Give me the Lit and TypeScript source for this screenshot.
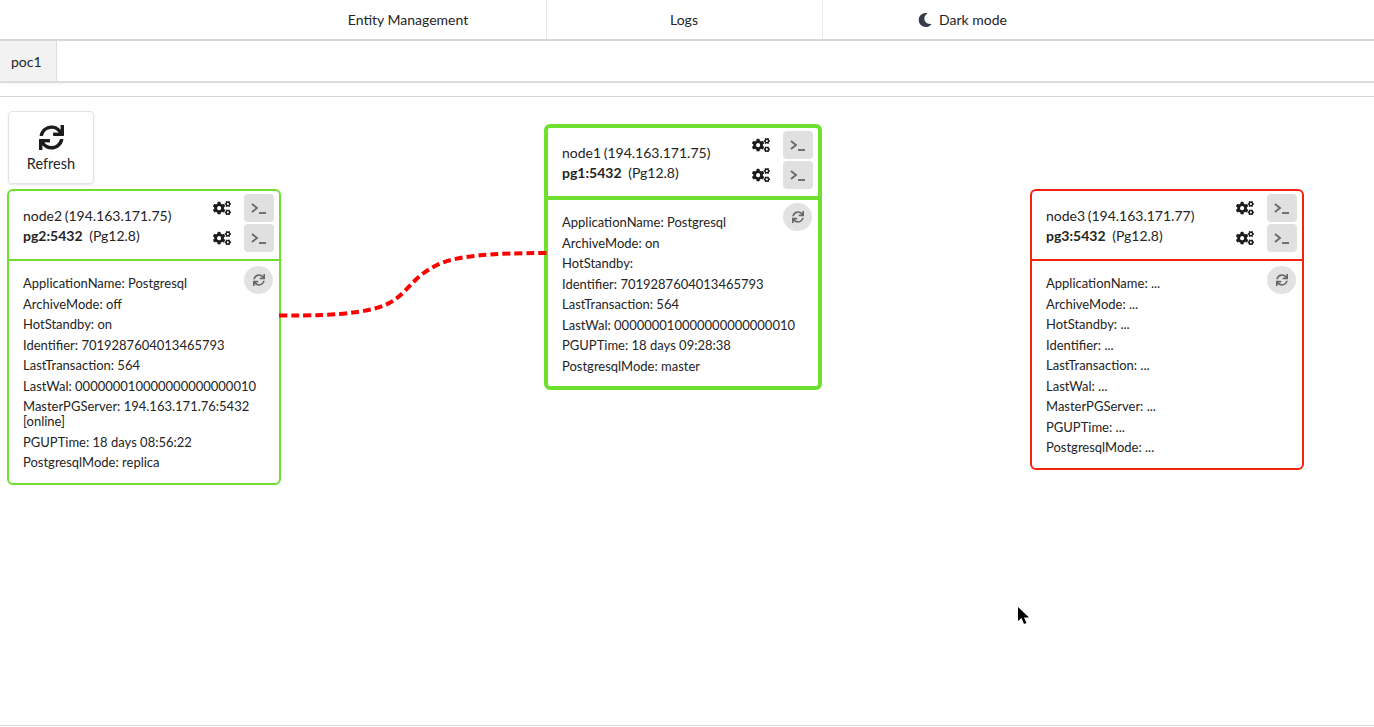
import { LitElement, html, css, svg } from 'lit';
import { customElement, property } from 'lit/decorators.js';

const SYNC = 'M440.65 12.57l4 82.77A247.16 247.16 0 0 0 255.83 8C134.73 8 33.91 94.92 12.29 209.82A12 12 0 0 0 24.09 224h49.05a12 12 0 0 0 11.67-9.26 175.91 175.91 0 0 1 317-56.94l-101.46-4.86a12 12 0 0 0-12.57 12v47.41a12 12 0 0 0 12 12H500a12 12 0 0 0 12-12V12a12 12 0 0 0-12-12h-47.37a12 12 0 0 0-11.98 12.57zM255.83 432a175.61 175.61 0 0 1-146-77.8l101.8 4.87a12 12 0 0 0 12.57-12v-47.4a12 12 0 0 0-12-12H12a12 12 0 0 0-12 12V500a12 12 0 0 0 12 12h47.35a12 12 0 0 0 12-12.6l-4.15-82.57A247.17 247.17 0 0 0 255.83 504c121.11 0 221.93-86.92 243.55-201.82a12 12 0 0 0-11.8-14.18h-49.05a12 12 0 0 0-11.67 9.26A175.86 175.86 0 0 1 255.83 432z';
const COGS = 'M512.1 191l-8.2 14.3c-3 5.3-9.4 7.5-15.1 5.4-11.8-4.4-22.6-10.7-32.1-18.6-4.6-3.8-5.8-10.5-2.8-15.7l8.2-14.3c-6.9-8-12.3-17.3-15.9-27.4h-16.5c-6 0-11.2-4.3-12.2-10.3-2-12-2.1-24.6 0-37.1 1-6 6.2-10.4 12.2-10.4h16.5c3.6-10.1 9-19.4 15.9-27.4l-8.2-14.3c-3-5.2-1.9-11.9 2.8-15.7 9.5-7.9 20.4-14.2 32.1-18.6 5.7-2.1 12.1.1 15.1 5.4l8.2 14.3c10.5-1.9 21.2-1.9 31.7 0L552 6.3c3-5.3 9.4-7.5 15.1-5.4 11.8 4.4 22.6 10.7 32.1 18.6 4.6 3.8 5.8 10.5 2.8 15.7l-8.2 14.3c6.9 8 12.3 17.3 15.9 27.4h16.5c6 0 11.2 4.3 12.2 10.3 2 12 2.1 24.6 0 37.1-1 6-6.2 10.4-12.2 10.4h-16.5c-3.6 10.1-9 19.4-15.9 27.4l8.2 14.3c3 5.2 1.9 11.9-2.8 15.7-9.5 7.9-20.4 14.2-32.1 18.6-5.7 2.1-12.1-.1-15.1-5.4l-8.2-14.3c-10.4 1.9-21.2 1.9-31.7 0zm-10.5-58.8c38.5 29.6 82.4-14.3 52.8-52.8-38.5-29.7-82.4 14.3-52.8 52.8zM386.3 286.1l33.7 16.8c10.1 5.8 14.5 18.1 10.5 29.1-8.9 24.2-26.4 46.4-42.6 65.8-7.4 8.9-20.2 11.1-30.3 5.3l-29.1-16.8c-16 13.7-34.6 24.6-54.9 31.7v33.6c0 11.6-8.3 21.6-19.7 23.6-24.6 4.2-50.4 4.4-75.9 0-11.5-2-20-11.9-20-23.6V418c-20.3-7.2-38.9-18-54.9-31.7L74 403c-10 5.8-22.9 3.6-30.3-5.3-16.2-19.4-33.3-41.6-42.2-65.7-4-10.9.4-23.2 10.5-29.1l33.3-16.8c-3.9-20.9-3.9-42.4 0-63.4L12 205.8c-10.1-5.8-14.6-18.1-10.5-29 8.9-24.2 26-46.4 42.2-65.8 7.4-8.9 20.2-11.1 30.3-5.3l29.1 16.8c16-13.7 34.6-24.6 54.9-31.7V57.1c0-11.5 8.2-21.5 19.6-23.5 24.6-4.2 50.5-4.4 76-.1 11.5 2 20 11.9 20 23.6v33.6c20.3 7.2 38.9 18 54.9 31.7l29.1-16.8c10-5.8 22.9-3.6 30.3 5.3 16.2 19.4 33.2 41.6 42.1 65.8 4 10.9.1 23.2-10 29.1l-33.7 16.8c3.9 21 3.9 42.5 0 63.5zm-117.6 21.1c59.2-77-28.7-164.9-105.7-105.7-59.2 77 28.7 164.9 105.7 105.7zm243.4 182.7l-8.2 14.3c-3 5.3-9.4 7.5-15.1 5.4-11.8-4.4-22.6-10.7-32.1-18.6-4.6-3.8-5.8-10.5-2.8-15.7l8.2-14.3c-6.9-8-12.3-17.3-15.9-27.4h-16.5c-6 0-11.2-4.3-12.2-10.3-2-12-2.1-24.6 0-37.1 1-6 6.2-10.4 12.2-10.4h16.5c3.6-10.1 9-19.4 15.9-27.4l-8.2-14.3c-3-5.2-1.9-11.9 2.8-15.7 9.5-7.9 20.4-14.2 32.1-18.6 5.7-2.1 12.1.1 15.1 5.4l8.2 14.3c10.5-1.9 21.2-1.9 31.7 0l8.2-14.3c3-5.3 9.4-7.5 15.1-5.4 11.8 4.4 22.6 10.7 32.1 18.6 4.6 3.8 5.8 10.5 2.8 15.7l-8.2 14.3c6.9 8 12.3 17.3 15.9 27.4h16.5c6 0 11.2 4.3 12.2 10.3 2 12 2.1 24.6 0 37.1-1 6-6.2 10.4-12.2 10.4h-16.5c-3.6 10.1-9 19.4-15.9 27.4l8.2 14.3c3 5.2 1.9 11.9-2.8 15.7-9.5 7.9-20.4 14.2-32.1 18.6-5.7 2.1-12.1-.1-15.1-5.4l-8.2-14.3c-10.4 1.9-21.2 1.9-31.7 0zM501.6 431c38.5 29.6 82.4-14.3 52.8-52.8-38.5-29.6-82.4 14.3-52.8 52.8z';
const MOON = 'M283.211 512c78.962 0 151.079-35.925 198.857-94.792 7.068-8.708-.639-21.43-11.562-19.35-124.203 23.654-238.262-71.576-238.262-196.954 0-72.222 38.662-138.635 101.498-174.394 9.686-5.512 7.25-20.197-3.756-22.23A258.156 258.156 0 0 0 283.211 0c-141.309 0-256 114.511-256 256 0 141.309 114.511 256 256 256z';

const icon = (d: string, vb: string, cls: string) =>
  html`<svg class=${cls} viewBox=${vb} fill="currentColor">${svg`<path d=${d}></path>`}</svg>`;

type Row = [string, string];

@customElement('pg-node')
class PgNode extends LitElement {
  @property() host_ = '';
  @property() pg = '';
  @property({ type: Array }) rows: Row[] = [];
  @property({ type: Boolean }) thick = false;
  @property({ type: Boolean }) down = false;

  static styles = css`
    :host { display: block; position: absolute; box-sizing: border-box; }
    .card {
      position: relative;
      border: 2px solid #6fe02f;
      border-radius: 6px;
      background: #fff;
    }
    .card.down { border-color: #f5220f; }
    .card.thick { border-width: 4px; }
    .head {
      display: flex;
      align-items: center;
      justify-content: space-between;
      padding: 3px 5px 7px 14px;
      border-bottom: 2px solid #6fe02f;
    }
    .thick .head { padding-left: 14px; }
    .down .head { border-bottom-color: #f5220f; }
    .thick .head { border-bottom-width: 4px; }
    .title { line-height: 20px; margin-top: 6px; }
    .title .addr { word-spacing: -1px; }
    .title b { margin-right: 3px; }
    .actions { display: grid; grid-template-columns: auto 30px; gap: 2px 13px; align-items: center; }
    .cogs { width: 18px; height: 14.4px; color: #1c1c1c; display: block; }
    .term {
      height: 28px;
      border-radius: 4px;
      background: #e0e0e0;
      display: flex;
      align-items: center;
      justify-content: center;
    }
    .term svg { width: 16px; height: 13px; display: block; }
    .body { padding: 15px 14px 7px; font-size: 13px; }
    .row { line-height: 15.4px; margin-bottom: 5.1px; }
    .reload {
      position: absolute;
      top: 75px;
      right: 6px;
      width: 29px;
      height: 28px;
      border-radius: 50%;
      background: #e2e2e2;
      color: #666;
      display: flex;
      align-items: center;
      justify-content: center;
    }
    .reload svg { width: 12px; height: 12px; display: block; }
  `;

  private termBtn() {
    return html`<div class="term">
      <svg viewBox="0 0 16 13" fill="none" stroke="#666" stroke-width="1.8">
        <polyline points="1,2 6,6 1,10"></polyline>
        <line x1="8" y1="11" x2="15" y2="11"></line>
      </svg>
    </div>`;
  }

  render() {
    const cls = `card${this.thick ? ' thick' : ''}${this.down ? ' down' : ''}`;
    return html`
      <div class=${cls}>
        <div class="head">
          <div class="title">
            <div class="addr">${this.host_}</div>
            <div><b>${this.pg}</b> (Pg12.8)</div>
          </div>
          <div class="actions">
            ${icon(COGS, '0 0 640 512', 'cogs')}${this.termBtn()}
            ${icon(COGS, '0 0 640 512', 'cogs')}${this.termBtn()}
          </div>
        </div>
        <div class="reload">${icon(SYNC, '0 0 512 512', '')}</div>
        <div class="body">
          ${this.rows.map(([k, v]) => html`<div class="row">${`${k}: ${v}`}</div>`)}
        </div>
      </div>
    `;
  }
}

const NODES = [
  {
    name: 'node2 (194.163.171.75)', pg: 'pg2:5432', x: 7, y: 92, w: 274, thick: false, down: false,
    rows: [
      ['ApplicationName', 'Postgresql'],
      ['ArchiveMode', 'off'],
      ['HotStandby', 'on'],
      ['Identifier', '7019287604013465793'],
      ['LastTransaction', '564'],
      ['LastWal', '000000010000000000000010'],
      ['MasterPGServer', '194.163.171.76:5432 [online]'],
      ['PGUPTime', '18 days 08:56:22'],
      ['PostgresqlMode', 'replica'],
    ] as Row[],
  },
  {
    name: 'node1 (194.163.171.75)', pg: 'pg1:5432', x: 544, y: 27, w: 278, thick: true, down: false,
    rows: [
      ['ApplicationName', 'Postgresql'],
      ['ArchiveMode', 'on'],
      ['HotStandby', ''],
      ['Identifier', '7019287604013465793'],
      ['LastTransaction', '564'],
      ['LastWal', '000000010000000000000010'],
      ['PGUPTime', '18 days 09:28:38'],
      ['PostgresqlMode', 'master'],
    ] as Row[],
  },
  {
    name: 'node3 (194.163.171.77)', pg: 'pg3:5432', x: 1030, y: 92, w: 274, thick: false, down: true,
    rows: [
      'ApplicationName', 'ArchiveMode', 'HotStandby', 'Identifier', 'LastTransaction',
      'LastWal', 'MasterPGServer', 'PGUPTime', 'PostgresqlMode',
    ].map((k) => [k, '...'] as Row),
  },
];

@customElement('app-root')
class AppRoot extends LitElement {
  static styles = css`
    :host {
      display: block;
      font-family: Lato, 'Liberation Sans', sans-serif;
      font-size: 14px;
      color: #242424;
      height: 727px;
      overflow: hidden;
      background: #fff;
    }
    nav {
      display: flex;
      justify-content: center;
      height: 39px;
      padding-right: 5px;
      border-bottom: 2px solid #d9d9d9;
    }
    .item {
      box-sizing: border-box;
      width: 276px;
      display: flex;
      align-items: center;
      justify-content: center;
      gap: 7px;
      border-right: 1px solid #e8e8e8;
    }
    .item:last-child { border-right: none; padding-left: 4px; }
    .moon { width: 14px; height: 14px; color: #363c48; }
    .tabs {
      display: flex;
      height: 40px;
      border-bottom: 2px solid #dcdcdc;
      box-shadow: 0 2px 3px rgba(0, 0, 0, 0.03);
    }
    .tab {
      width: 45px;
      padding-left: 11px;
      display: flex;
      align-items: center;
      background: #f2f2f2;
      border-right: 1px solid #dedede;
    }
    .spacer { height: 13px; border-bottom: 1px solid #d9d9d9; }
    .canvas {
      position: relative;
      height: 629px;
      padding: 14px 8px 0;
      box-sizing: border-box;
      border-bottom: 1px solid #d9d9d9;
    }
    .refresh {
      box-sizing: border-box;
      width: 86px;
      height: 73px;
      border: 1px solid #e2e2e2;
      border-radius: 4px;
      box-shadow: 0 1px 2px rgba(0, 0, 0, 0.1);
      display: flex;
      flex-direction: column;
      align-items: center;
      padding-top: 13px;
      gap: 5px;
    }
    .refresh svg { width: 25px; height: 25px; color: #1c1c1c; }
    .refresh span { font-size: 14.5px; }
    .link { position: absolute; left: 0; top: 0; width: 600px; height: 300px; pointer-events: none; z-index: 1; }
    .cursor { position: absolute; left: 1017px; top: 510px; width: 13px; height: 19px; }
  `;

  render() {
    return html`
      <nav>
        <div class="item">Entity Management</div>
        <div class="item">Logs</div>
        <div class="item">${icon(MOON, '0 0 512 512', 'moon')}Dark mode</div>
      </nav>
      <div class="tabs"><div class="tab">poc1</div></div>
      <div class="spacer"></div>
      <div class="canvas">
        <div class="refresh">
          ${icon(SYNC, '0 0 512 512', '')}
          <span>Refresh</span>
        </div>
        ${NODES.map(
          (n) => html`<pg-node
            style="left:${n.x}px;top:${n.y}px;width:${n.w}px"
            .host_=${n.name}
            .pg=${n.pg}
            .rows=${n.rows}
            ?thick=${n.thick}
            ?down=${n.down}
          ></pg-node>`,
        )}
        <svg class="link" viewBox="0 0 600 300" fill="none">
          <path
            d="M279 218.5C345 219 380 215 397 201C412 189 415 179 437 168C455 159 490 156 547 156"
            stroke="#ff0000"
            stroke-width="4"
            stroke-dasharray="8 4"
          ></path>
        </svg>
        <svg class="cursor" viewBox="0 0 13 19">
          <path d="M1 0L1 14L4.5 11L7 17L9.5 16L7 10.5L12 10.5Z" fill="#000"></path>
        </svg>
      </div>
    `;
  }
}
